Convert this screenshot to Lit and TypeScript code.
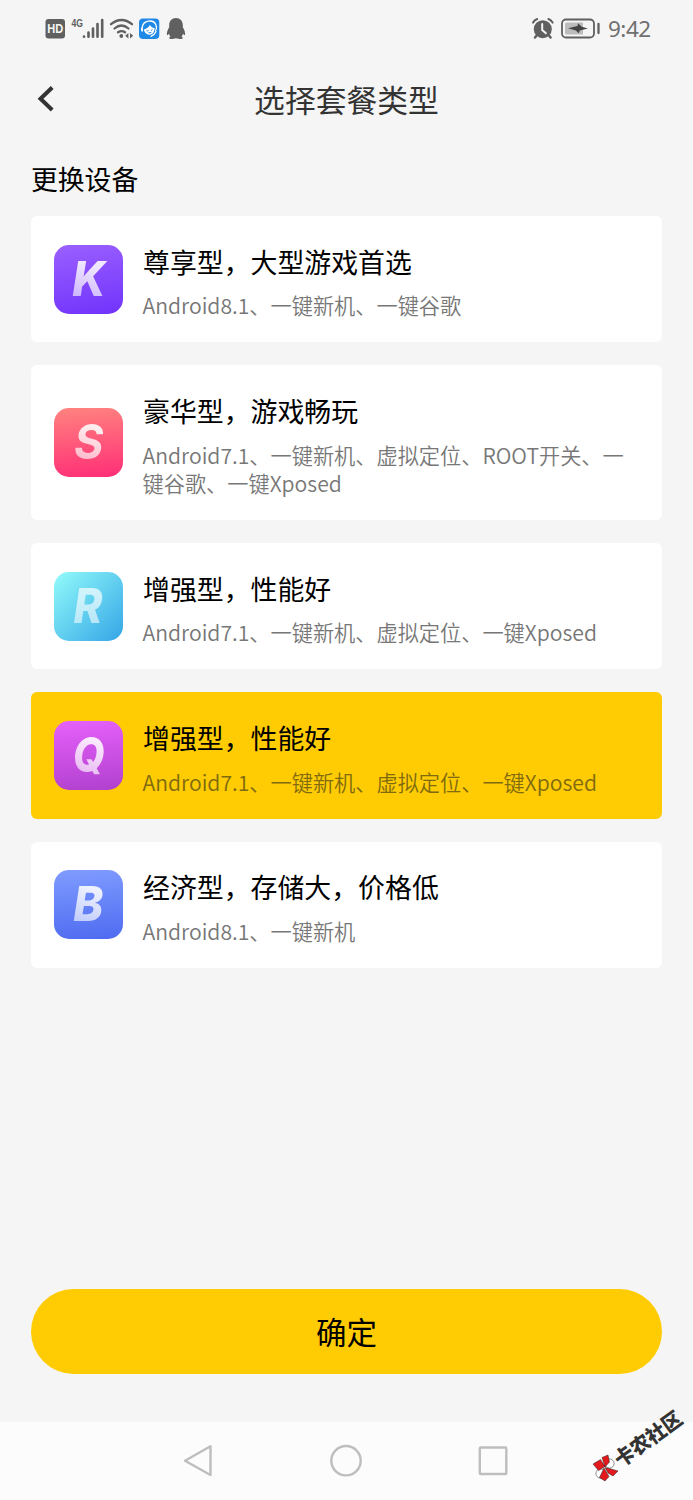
import { LitElement, html, css } from "lit";
import { customElement, property, state } from "lit/decorators.js";

interface Plan {
  letter: string;
  title: string;
  desc: string;
}

const PLANS: Plan[] = [
  { letter: "K", title: "尊享型，大型游戏首选", desc: "Android8.1、一键新机、一键谷歌" },
  { letter: "S", title: "豪华型，游戏畅玩", desc: "Android7.1、一键新机、虚拟定位、ROOT开关、一键谷歌、一键Xposed" },
  { letter: "R", title: "增强型，性能好", desc: "Android7.1、一键新机、虚拟定位、一键Xposed" },
  { letter: "Q", title: "增强型，性能好", desc: "Android7.1、一键新机、虚拟定位、一键Xposed" },
  { letter: "B", title: "经济型，存储大，价格低", desc: "Android8.1、一键新机" },
];

@customElement("status-bar")
class StatusBar extends LitElement {
  static styles = css`
    :host { display: flex; justify-content: space-between; height: 58px; padding: 0 42px 0 45px; box-sizing: border-box; }
    svg { display: block; }
    .right { display: flex; }
    .time { font: 400 22.500px/58px "Noto Sans", sans-serif; color: #707070; width: 43px; letter-spacing: -0.500px; margin-left: 7px; white-space: nowrap; }
    .hd { font: 700 12px "Liberation Sans", sans-serif; fill: #f5f5f5; }
    .net { font: 700 11.500px "Liberation Sans", sans-serif; fill: #606060; }
  `;
  render() {
    return html`
      <svg width="145" height="58" viewBox="45 0 145 58">
        <rect x="45.5" y="19" width="19.5" height="19.5" rx="3" fill="#606060" />
        <text class="hd" x="47.3" y="33.200" textLength="16" lengthAdjust="spacingAndGlyphs">HD</text>
        <text class="net" x="71.5" y="27" textLength="11.5" lengthAdjust="spacingAndGlyphs">4G</text>
        <g stroke="#606060" stroke-width="2.6" stroke-linecap="round">
          <path d="M84 36.5v.3M88.500 32.500v4.300M93 28.500v8.300M97.500 24v12.800M102.200 20v16.800" />
        </g>
        <g fill="none" stroke="#606060" stroke-width="2.3" stroke-linecap="round">
          <path d="M111 24.200Q121.500 15.800 132 24.200M114.500 28.500Q121.500 22.500 128.500 28.500M118 32.300Q121.500 29.800 125 32.300" />
        </g>
        <circle cx="121.300" cy="36" r="1.900" fill="#606060" />
        <path d="M128.400 33v5.600l-3.200-2.800zM130 33v5.600l3.200-2.800z" fill="#606060" />
        <rect x="139" y="18.500" width="20.300" height="20.500" rx="4" fill="#2089e5" />
        <path d="M142.300 27.500c.5-7 11-9 13.700-2.500.8 2 .5 4-.4 5.500" fill="none" stroke="#fff" stroke-width="1.300" stroke-linecap="round" />
        <path d="M141.600 27.600c1.600-.5 2 3.800.6 4.300-1.300-.4-1.700-3.600-.6-4.300z" fill="#fff" />
        <path d="M143.800 29.500c2.200-.5 4.700-2 6.200-4.500 1 1.800 2.500 2.800 4.600 3.300-.1 3.800-2.100 6.400-5.200 6.400-3 0-4.900-2-5.600-5.200z" fill="#fff" />
        <path d="M146.500 30.600q1 .8 2-.1M150.800 30q1 .6 1.700-.3M148.500 32.600q1.400.6 2.800-.3" stroke="#2089e5" fill="none" />
        <path d="M156 31.500q-1.500 3.600-5 4.800" fill="none" stroke="#fff" stroke-width="1.300" stroke-linecap="round" />
        <path d="M176 18c-4.200 0-6.800 2.900-6.800 7v2.300c-1.200 1.800-2.400 4.200-2.300 7 .1 1.500 1.100.8 2-.5.3 1 .8 1.900 1.600 2.600-1.800.6-1.500 2.600.5 2.600 2 0 3.500-.3 5-.8 1.500.5 3 .8 5 .8 2 0 2.300-2 .5-2.600.8-.7 1.300-1.600 1.600-2.600.9 1.300 1.900 2 2 .5.1-2.800-1.100-5.200-2.300-7V25c0-4.100-2.600-7-6.800-7z" fill="#606060" />
      </svg>
      <div class="right">
        <svg width="70" height="58" viewBox="531 0 70 58">
          <circle cx="542.800" cy="29.200" r="9" fill="#606060" />
          <path d="M533 22.600q1.500-2.600 4.200-3.600M552.600 22.600q-1.500-2.600-4.200-3.600" stroke="#606060" stroke-width="2" stroke-linecap="round" fill="none" />
          <path d="M536.600 35.500l-1.600 2M549 35.500l1.600 2" stroke="#606060" stroke-width="2.500" stroke-linecap="round" />
          <path d="M542.200 24v6l3.700 3.200" fill="none" stroke="#f5f5f5" stroke-width="2" stroke-linecap="round" />
          <rect x="562" y="19.500" width="32" height="18" rx="4" fill="#f5f5f5" stroke="#606060" stroke-width="1.800" />
          <path d="M566.500 22.500h16.500v12h-16.500q-1.500 0-1.500-1.500v-9q0-1.500 1.500-1.500z" fill="#bcbcbc" />
          <path d="M568 28.300l9.500-2.300.5-2.700 3.800 3.500 6 1.700-8 2-1 2.800-3-2.700z" fill="#444" />
          <path d="M598.500 24v9" stroke="#606060" stroke-width="2.300" stroke-linecap="round" />
        </svg>
        <div class="time">9:42</div>
      </div>
    `;
  }
}

@customElement("plan-card")
class PlanCard extends LitElement {
  @property({ attribute: false }) plan!: Plan;
  @property({ type: Boolean, reflect: true }) selected = false;

  static styles = css`
    :host { display: flex; align-items: center; gap: 20px; padding: 26.800px 23px 22.500px; border-radius: 6px; background: #fff; box-sizing: border-box; cursor: pointer; }
    :host([selected]) { background: #ffcc03; }
    .badge { flex: none; width: 69px; height: 69px; border-radius: 15px; display: flex; align-items: center; justify-content: center; margin-top: -4.500px; }
    .letter { font: italic 800 48.500px/69px Inter, sans-serif; color: transparent; background-clip: text; -webkit-background-clip: text; background-image: linear-gradient(200deg, #ffffffe0 30%, #ffffffa0 75%); padding: 0 5px; margin-top: -2px; transform: scaleX(.93); }
    .K { background: linear-gradient(170deg, #9a60ff, #7133fb); }
    .S { background: linear-gradient(175deg, #ff837f, #ff2e77); }
    .R { background: linear-gradient(135deg, #92fbfa, #34a5e6); }
    .Q { background: linear-gradient(175deg, #e661fb, #b140ce); }
    .B { background: linear-gradient(175deg, #809cff, #4e6bf1); }
    .S .letter { font-weight: 700; }
    .R .letter { background-image: linear-gradient(200deg, #ffffffb0 30%, #ffffff90 75%); transform: scaleX(.9); }
    .Q .letter { transform: scaleX(.84); }
    .copy { flex: 1; min-width: 0; }
    .title { font: 400 26.900px/38px "Noto Sans CJK SC", sans-serif; color: #000; white-space: nowrap; }
    .desc { font: 350 21.200px/28.400px "Noto Sans CJK SC", sans-serif; color: #777; margin: 10.600px -3px 0 -0.500px; }
    :host([selected]) .desc { color: #806a10; }
  `;
  render() {
    return html`
      <div class="badge ${this.plan.letter}"><span class="letter">${this.plan.letter}</span></div>
      <div class="copy">
        <div class="title">${this.plan.title}</div>
        <div class="desc">${this.plan.desc}</div>
      </div>
    `;
  }
}

@customElement("app-root")
class AppRoot extends LitElement {
  @state() private selected = 3;

  static styles = css`
    :host { display: flex; flex-direction: column; position: relative; width: 693px; height: 1500px; overflow: hidden; background: #f5f5f5; font-family: "Noto Sans CJK SC", sans-serif; }
    .header { display: grid; grid-template-columns: 60px 1fr 60px; align-items: center; height: 82px; }
    .back { justify-self: end; }
    h1 { margin: 0; font-weight: 400; font-size: 30.800px; line-height: 44px; color: #333; text-align: center; }
    h2 { margin: 19px 31px 0; font-weight: 400; font-size: 26.800px; line-height: 40px; color: #000; }
    .list { display: flex; flex-direction: column; gap: 23px; margin: 17px 31px 0; }
    .confirm { margin: auto 31px 48px; height: 85px; flex: none; border: 0; border-radius: 43px; background: #ffcc03; font: 400 30.500px/85px "Noto Sans CJK SC", sans-serif; color: #000; padding: 0; }
    .nav { height: 78px; flex: none; background: #fcfcfc; display: flex; justify-content: center; }
    .mark { position: absolute; left: 588px; top: 1400px; }
    .brand { font: 900 20.500px "Noto Sans CJK SC", sans-serif; fill: #333; }
  `;
  render() {
    return html`
      <status-bar></status-bar>
      <div class="header">
        <svg class="back" width="24" height="30" viewBox="0 0 24 30"><path d="M16.200 3.500L4.500 14.800L16.200 26" fill="none" stroke="#333" stroke-width="4" /></svg>
        <h1>选择套餐类型</h1>
      </div>
      <h2>更换设备</h2>
      <div class="list">
        ${PLANS.map((plan, i) => html`<plan-card .plan=${plan} ?selected=${i === this.selected} @click=${() => (this.selected = i)}></plan-card>`)}
      </div>
      <button class="confirm">确定</button>
      <div class="nav">
        <svg width="341" height="78" viewBox="176.500 1422 341 78" fill="none" stroke="#bebebe" stroke-width="2.400" stroke-linejoin="round">
          <path d="M211 1446.300V1475L185.500 1460.700Z" />
          <circle cx="346.500" cy="1460.700" r="14.700" />
          <rect x="480.300" y="1447.500" width="26.500" height="26.500" rx="1" />
        </svg>
      </div>
      <svg class="mark" width="105" height="96" viewBox="588 1400 105 96">
        <g stroke="#222" stroke-width=".5">
          <circle cx="609.500" cy="1463.500" r="4.600" fill="#fff" />
          <circle cx="600.500" cy="1473.500" r="4.600" fill="#fff" />
          <path d="M593 1464l7.500-4.500 4.500 7-6.500 4zM602 1457.500l6-2.500 1.500 7-4.500 5zM605 1467.500l6 1.500 7 2-5 5-5-3zM604 1468l5 8.500-4 4.500-5.500-3.500z" fill="#e3191d" />
        </g>
        <text class="brand" transform="translate(621 1468) rotate(-36)" textLength="78" lengthAdjust="spacingAndGlyphs">卡农社区</text>
      </svg>
    `;
  }
}
